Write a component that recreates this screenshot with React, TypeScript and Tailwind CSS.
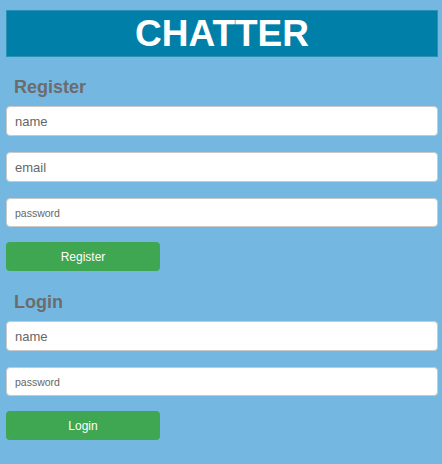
import { useState } from 'react';

const inputCls =
  'w-full rounded-[4px] border border-[#c9c9c9] bg-white px-[8px] text-[#555] placeholder:text-[#666] outline-none';

export default function App() {
  const [reg, setReg] = useState({ name: '', email: '', password: '' });
  const [login, setLogin] = useState({ name: '', password: '' });

  return (
    <div className="min-h-screen bg-[#74b8e1] pl-[6px] pr-[4px] pt-[10px] font-['Liberation_Sans',Arial,sans-serif]">
      <header className="flex h-[47px] items-center justify-center border border-[#2b91b4] bg-[#0080a8]">
        <h1 className="text-[37px] font-bold leading-none text-white">CHATTER</h1>
      </header>

      {/* Register */}
      <section className="mt-[19px]">
        <h2 className="pl-[8px] text-[18px] font-bold leading-[22px] text-[#6c6c6c]">Register</h2>
        <div className="mt-[8px] flex flex-col gap-[16px]">
          <input
            className={`${inputCls} h-[30px] text-[13px]`}
            placeholder="name"
            value={reg.name}
            onChange={e => setReg({ ...reg, name: e.target.value })}
          />
          <input
            className={`${inputCls} h-[30px] text-[13px]`}
            placeholder="email"
            value={reg.email}
            onChange={e => setReg({ ...reg, email: e.target.value })}
          />
          <input
            type="password"
            className={`${inputCls} h-[29px] text-[10.5px]`}
            placeholder="password"
            value={reg.password}
            onChange={e => setReg({ ...reg, password: e.target.value })}
          />
        </div>
        <button className="mt-[15px] h-[29px] w-[154px] rounded-[4px] bg-[#3fa652] text-[12px] text-white">
          Register
        </button>
      </section>

      {/* Login */}
      <section className="mt-[20px]">
        <h2 className="pl-[8px] text-[18px] font-bold leading-[22px] text-[#6c6c6c]">Login</h2>
        <div className="mt-[8px] flex flex-col gap-[16px]">
          <input
            className={`${inputCls} h-[30px] text-[13px]`}
            placeholder="name"
            value={login.name}
            onChange={e => setLogin({ ...login, name: e.target.value })}
          />
          <input
            type="password"
            className={`${inputCls} h-[29px] text-[10.5px]`}
            placeholder="password"
            value={login.password}
            onChange={e => setLogin({ ...login, password: e.target.value })}
          />
        </div>
        <button className="mt-[15px] h-[29px] w-[154px] rounded-[4px] bg-[#3fa652] text-[12px] text-white">
          Login
        </button>
      </section>
    </div>
  );
}
